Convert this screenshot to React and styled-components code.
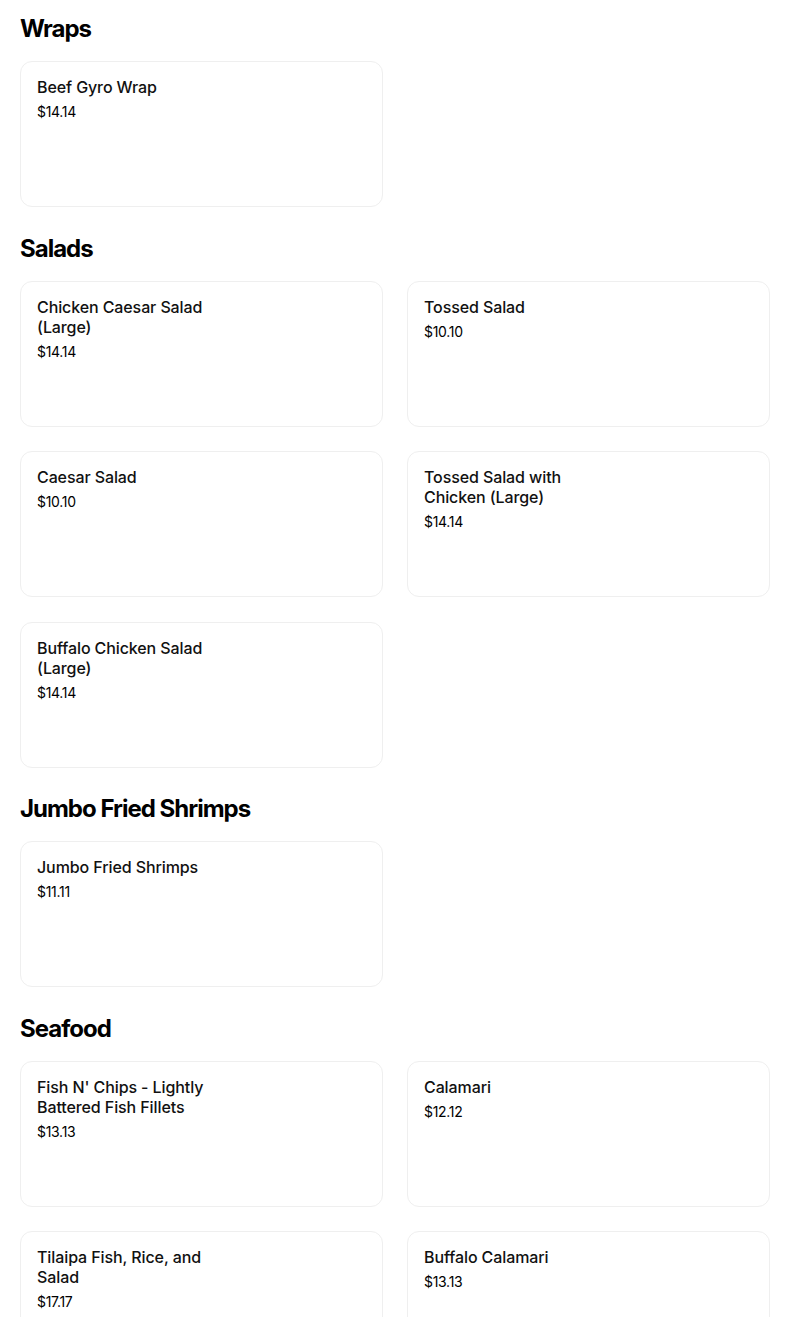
import React from 'react';
import styled, { createGlobalStyle } from 'styled-components';

const GlobalStyle = createGlobalStyle`
  body {
    margin: 0;
    background: #fff;
    font-family: Inter, "Noto Sans", sans-serif;
    color: #000;
  }
`;

const Page = styled.main`
  padding: 13px 20px 0;
  width: 750px;
`;

const Section = styled.section`
  &:not(:first-child) {
    margin-top: 25.5px;
  }
`;

const Heading = styled.h2`
  margin: 0 0 16px;
  font-size: 24px;
  line-height: 32px;
  font-weight: 700;
  letter-spacing: -1px;
`;

const Grid = styled.div`
  display: grid;
  grid-template-columns: repeat(2, 363px);
  gap: 24.5px 24px;
`;

const Card = styled.div`
  box-sizing: border-box;
  height: 146px;
  border: 1px solid #efefef;
  border-radius: 12px;
  padding: 15px 16px;
`;

const Name = styled.div`
  max-width: 190px;
  font-size: 16px;
  line-height: 20px;
  font-weight: 500;
  letter-spacing: -0.1px;
  color: #111;
`;

const Price = styled.div`
  margin-top: 5px;
  font-size: 14px;
  line-height: 20px;
  font-weight: 400;
  letter-spacing: -0.3px;
  color: #000;
`;

const menu = [
  {
    title: 'Wraps',
    items: [{ name: 'Beef Gyro Wrap', price: '$14.14' }],
  },
  {
    title: 'Salads',
    items: [
      { name: 'Chicken Caesar Salad (Large)', price: '$14.14' },
      { name: 'Tossed Salad', price: '$10.10' },
      { name: 'Caesar Salad', price: '$10.10' },
      { name: 'Tossed Salad with Chicken (Large)', price: '$14.14' },
      { name: 'Buffalo Chicken Salad (Large)', price: '$14.14' },
    ],
  },
  {
    title: 'Jumbo Fried Shrimps',
    items: [{ name: 'Jumbo Fried Shrimps', price: '$11.11' }],
  },
  {
    title: 'Seafood',
    items: [
      { name: "Fish N' Chips - Lightly Battered Fish Fillets", price: '$13.13' },
      { name: 'Calamari', price: '$12.12' },
      { name: 'Tilaipa Fish, Rice, and Salad', price: '$17.17' },
      { name: 'Buffalo Calamari', price: '$13.13' },
    ],
  },
];

export default function App() {
  return (
    <>
      <GlobalStyle />
      <Page>
        {menu.map((section) => (
          <Section key={section.title}>
            <Heading>{section.title}</Heading>
            <Grid>
              {section.items.map((item) => (
                <Card key={item.name}>
                  <Name>{item.name}</Name>
                  <Price>{item.price}</Price>
                </Card>
              ))}
            </Grid>
          </Section>
        ))}
      </Page>
    </>
  );
}
